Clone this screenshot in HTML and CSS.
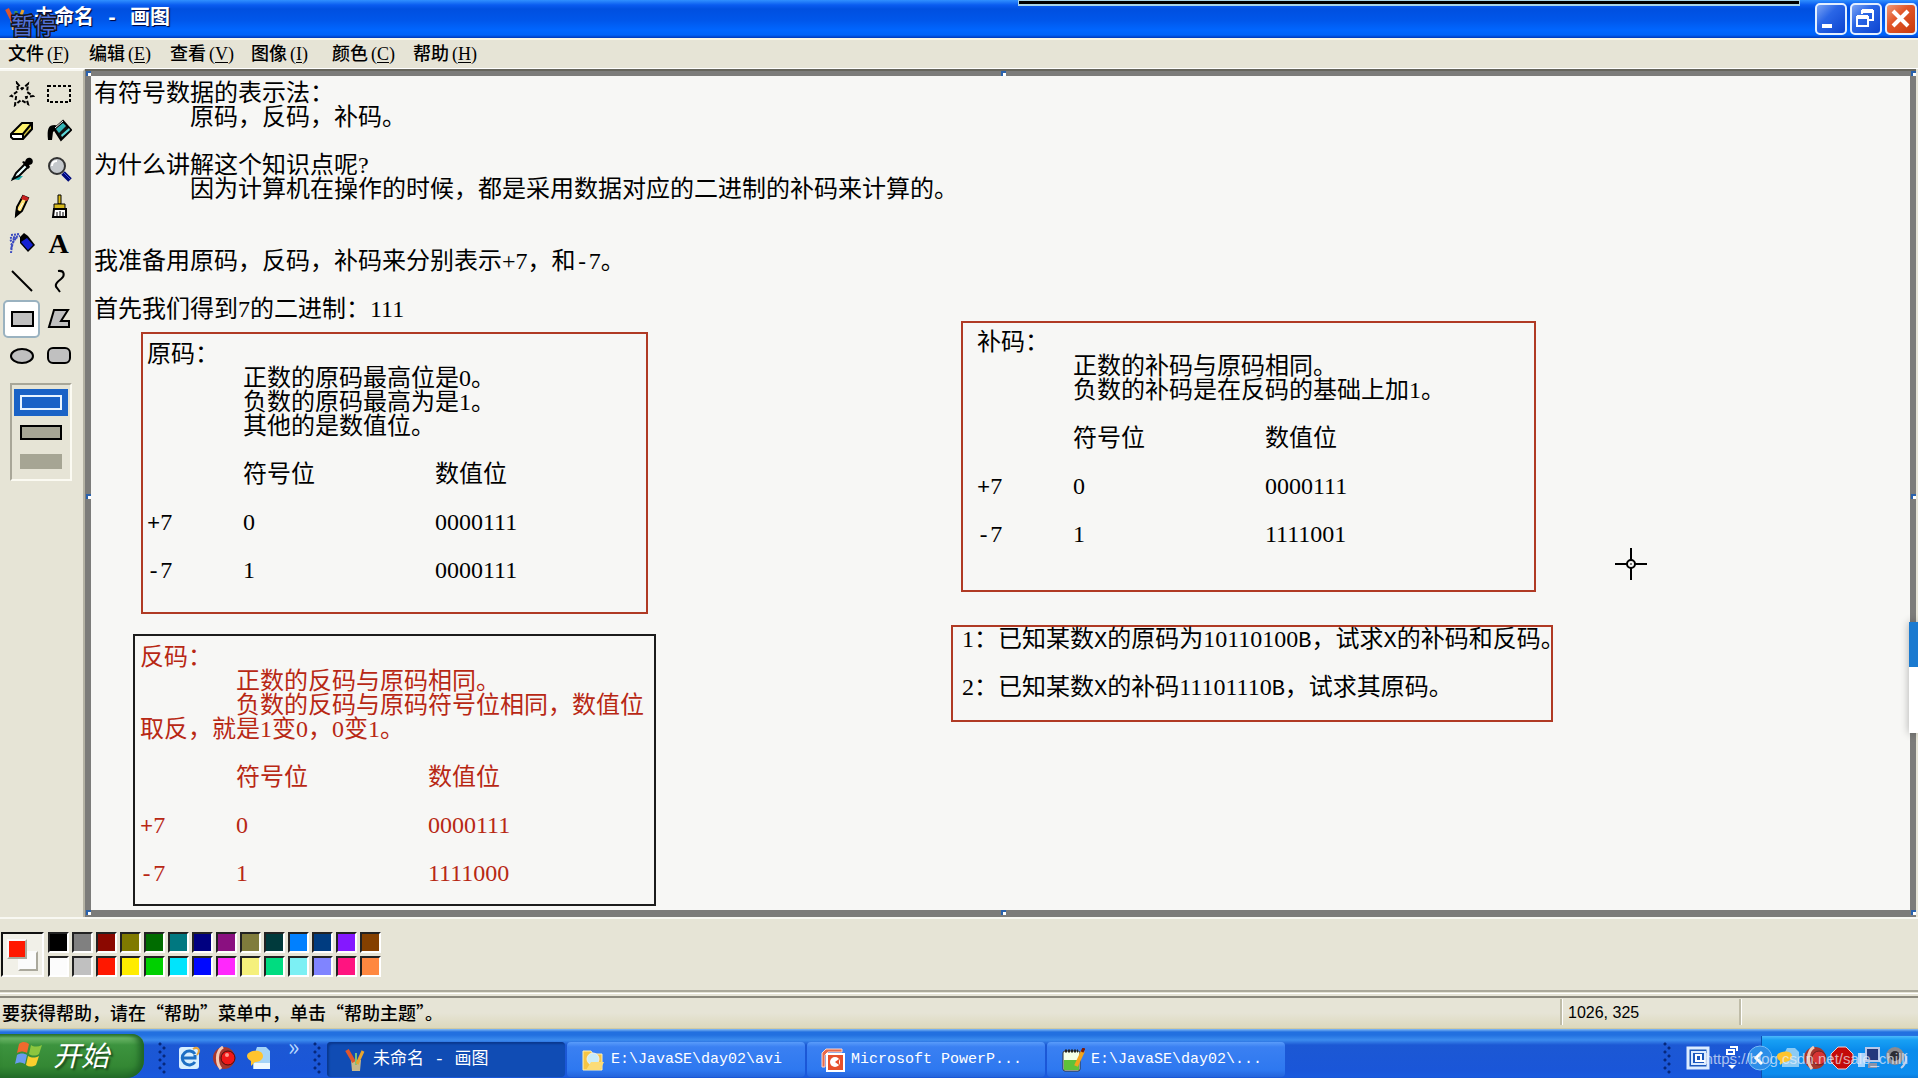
FILE: index.html
```html
<!DOCTYPE html>
<html lang="zh-CN">
<head>
<meta charset="utf-8">
<title>未命名 - 画图</title>
<link rel="stylesheet" href="styles.css">
</head>
<body>
<header class="titlebar">
  <svg class="app-icon" viewBox="0 0 24 26"><path d="M6 12l2 12h8l2-12z" fill="#c8b88a"/><path d="M3 3l6 12" stroke="#e0562c" stroke-width="4"/><path d="M12 5v12" stroke="#4d9b4a" stroke-width="3"/><path d="M19 4l-5 13" stroke="#e7a52f" stroke-width="3"/></svg>
  <h1 class="title">未命名 - 画图</h1>
  <span class="pause-badge">暂停</span>
  <span class="dock-strip"></span>
  <div class="window-buttons">
    <button class="win-btn" aria-label="最小化"><svg viewBox="0 0 28 28"><path d="M5 19h10v4H5z" fill="#fff"/></svg></button>
    <button class="win-btn" aria-label="还原"><svg viewBox="0 0 28 28" fill="none" stroke="#fff" stroke-width="2"><path d="M10 9V6h11v9h-4" /><path d="M5 12h11v9H5z"/><path d="M5 12h11M10 6h11" stroke-width="4"/></svg></button>
    <button class="win-btn close" aria-label="关闭"><svg viewBox="0 0 28 28"><path d="M6 6l15 15M21 6L6 21" stroke="#fff" stroke-width="4"/></svg></button>
  </div>
</header>

<nav class="menubar">
  <button class="menu">文件<span class="key">(<u>F</u>)</span></button>
  <button class="menu">编辑<span class="key">(<u>E</u>)</span></button>
  <button class="menu">查看<span class="key">(<u>V</u>)</span></button>
  <button class="menu">图像<span class="key">(<u>I</u>)</span></button>
  <button class="menu">颜色<span class="key">(<u>C</u>)</span></button>
  <button class="menu">帮助<span class="key">(<u>H</u>)</span></button>
</nav>

<main class="workspace">
  <aside class="toolbox">
    <div class="tools">
      <button class="tool" aria-label="任意形状的裁剪"><svg viewBox="0 0 26 26"><path d="M8 2l5 6 6-5-1 8 6 4-7 1 2 7-7-4-6 5 1-8-5-1 7-5z" fill="none" stroke="#000" stroke-width="2" stroke-dasharray="4 2"/></svg></button>
      <button class="tool" aria-label="选定"><svg viewBox="0 0 26 26"><path d="M2 5h22v16H2z" fill="none" stroke="#000" stroke-width="2" stroke-dasharray="3 2"/></svg></button>
      <button class="tool" aria-label="橡皮"><svg viewBox="0 0 26 26"><path d="M2 16L14 5h9l-9 11z" fill="#fff36b"/><path d="M14 16l9-11v6l-9 10z" fill="#d2c342"/><path d="M2 16h12v5H2z" fill="#fff"/><path d="M2 16L13 5h10v6l-9 10H4l-2-2zh12l9-11M14 16v5" fill="none" stroke="#000" stroke-width="2"/></svg></button>
      <button class="tool" aria-label="用颜色填充"><svg viewBox="0 0 26 26"><path d="M2 22c-1-11 0-15 7-15l4 2-6 5-1 8z" fill="#000"/><path d="M8 11l9-8 8 9-10 10z" fill="#111" stroke="#000" stroke-width="2"/><path d="M10 11l7-6 3 3-7 7z" fill="#31b5b7"/><path d="M15 17l8-7 1 2-8 7z" fill="#5cd8da"/><path d="M9 10l8-7" stroke="#fff" stroke-width="1"/></svg></button>
      <button class="tool" aria-label="取色"><svg viewBox="0 0 26 26"><path d="M2 23c3-4 8-3 12-3l-4 4z" fill="#1aa7aa"/><path d="M4 23l3-6 9-9 3 3-9 9z" fill="#e9ffff" stroke="#000" stroke-width="2"/><path d="M13 6l2-1 1 1c1-5 5-5 7-3 2 3 0 6-3 6l1 2-2 2z" fill="#000"/></svg></button>
      <button class="tool" aria-label="放大镜"><svg viewBox="0 0 26 26"><path d="M17 17l7 7" stroke="#000a79" stroke-width="5"/><path d="M18 17l6 6" stroke="#4653e0" stroke-width="1"/><circle cx="11" cy="10" r="8" fill="#c4c8cc" stroke="#333" stroke-width="2"/><path d="M6 10c0-3 2-5 5-5" stroke="#fff" stroke-width="2" fill="none"/></svg></button>
      <button class="tool" aria-label="铅笔"><svg viewBox="0 0 26 26"><path d="M14 3l5 2-6 13-6 5 1-9z" fill="#ffe071" stroke="#000" stroke-width="2"/><path d="M14 2l6 3-2 3-6-2z" fill="#c71f1f"/><path d="M6 24l1-8 5 3z" fill="#000"/><path d="M14 10l-4 7" stroke="#fff" stroke-width="1"/></svg></button>
      <button class="tool" aria-label="刷子"><svg viewBox="0 0 26 26"><path d="M12 2h3v9h-3z" fill="#ddbd17" stroke="#000"/><path d="M8 11h11v5H8z" fill="#d6b91c" stroke="#000"/><path d="M8 16h12v8H7z" fill="#fff" stroke="#000" stroke-width="2"/><path d="M11 19v5M14 18v6M17 19v5" stroke="#000"/></svg></button>
      <button class="tool" aria-label="喷枪"><svg viewBox="0 0 26 26"><path d="M2 4l9-1M1 7l10-2M1 10l8-4M2 14l5-7M2 18l3-9M2 22l1-8" stroke="#3c4bc0" stroke-width="2" stroke-dasharray="2 1"/><path d="M11 6l4-4 4 3 7 9-7 7-8-9z" fill="#000"/><path d="M12 11l6-4 6 7-5 5z" fill="#1420d2"/></svg></button>
      <button class="tool letter" aria-label="文字">A</button>
      <button class="tool" aria-label="直线"><svg viewBox="0 0 26 26"><path d="M3 3l20 20" stroke="#000" stroke-width="2"/></svg></button>
      <button class="tool" aria-label="曲线"><svg viewBox="0 0 26 26"><path d="M12 3c7-1 7 5 3 8s-7 6-4 9l3 4" fill="none" stroke="#000" stroke-width="2"/></svg></button>
      <button class="tool selected" aria-label="矩形"><svg viewBox="0 0 26 26"><path d="M3 6h21v14H3z" fill="#c0c0c0" stroke="#000" stroke-width="2"/></svg></button>
      <button class="tool" aria-label="多边形"><svg viewBox="0 0 26 26"><path d="M8 4h14l-7 11h8v6H3z" fill="#c0c0c0" stroke="#000" stroke-width="2"/></svg></button>
      <button class="tool" aria-label="椭圆"><svg viewBox="0 0 26 26"><ellipse cx="13" cy="13" rx="11" ry="7" fill="#c0c0c0" stroke="#000" stroke-width="2"/></svg></button>
      <button class="tool" aria-label="圆角矩形"><svg viewBox="0 0 26 26"><rect x="2" y="5" width="22" height="15" rx="5" fill="#c0c0c0" stroke="#000" stroke-width="2"/></svg></button>
    </div>
    <div class="fill-options">
      <button class="fill-option outline selected" aria-label="仅边框"><span></span></button>
      <button class="fill-option both" aria-label="边框和填充"><span></span></button>
      <button class="fill-option solid" aria-label="仅填充"><span></span></button>
    </div>
  </aside>

  <section class="stage">
    <div class="canvas">
      <div class="note intro">
        <p>有符号数据的表示法：</p>
        <p class="indent">原码，反码，补码。</p>
        <p class="skip">为什么讲解这个知识点呢?</p>
        <p class="indent">因为计算机在操作的时候，都是采用数据对应的二进制的补码来计算的。</p>
        <p class="skip-two">我准备用原码，反码，补码来分别表示+7，和<span class="mono">-</span>7。</p>
        <p class="skip">首先我们得到7的二进制：111</p>
      </div>

      <div class="note box yuan">
        <p>原码：</p>
        <p class="indent">正数的原码最高位是0。</p>
        <p class="indent">负数的原码最高为是1。</p>
        <p class="indent">其他的是数值位。</p>
        <table>
          <tr><th></th><th>符号位</th><th>数值位</th></tr>
          <tr><td><span class="mono">+</span>7</td><td>0</td><td>0000111</td></tr>
          <tr><td><span class="mono">-</span>7</td><td>1</td><td>0000111</td></tr>
        </table>
      </div>

      <div class="note box fan">
        <p>反码：</p>
        <p class="indent">正数的反码与原码相同。</p>
        <p class="indent">负数的反码与原码符号位相同，数值位</p>
        <p>取反，就是1变0，0变1。</p>
        <table>
          <tr><th></th><th>符号位</th><th>数值位</th></tr>
          <tr><td><span class="mono">+</span>7</td><td>0</td><td>0000111</td></tr>
          <tr><td><span class="mono">-</span>7</td><td>1</td><td>1111000</td></tr>
        </table>
      </div>

      <div class="note box bu">
        <p>补码：</p>
        <p class="indent">正数的补码与原码相同。</p>
        <p class="indent">负数的补码是在反码的基础上加1。</p>
        <table>
          <tr><th></th><th>符号位</th><th>数值位</th></tr>
          <tr><td><span class="mono">+</span>7</td><td>0</td><td>0000111</td></tr>
          <tr><td><span class="mono">-</span>7</td><td>1</td><td>1111001</td></tr>
        </table>
      </div>

      <div class="note box quiz">
        <p>1：已知某数<span class="mono">X</span>的原码为10110100<span class="mono">B</span>，试求<span class="mono">X</span>的补码和反码。</p>
        <p class="skip">2：已知某数<span class="mono">X</span>的补码11101110<span class="mono">B</span>，试求其原码。</p>
      </div>

      <svg class="crosshair" viewBox="0 0 32 32" fill="none" stroke="#000" stroke-width="2"><path d="M0 16h12M20 16h12M16 0v12M16 20v12"/><circle cx="16" cy="16" r="4"/><path d="M15 16h2" stroke-width="1"/></svg>
    </div>
    <i class="handle nw"></i><i class="handle n"></i><i class="handle ne"></i>
    <i class="handle w"></i><i class="handle e"></i>
    <i class="handle sw"></i><i class="handle s"></i><i class="handle se"></i>
  </section>
  <span class="side-tab"></span>
</main>

<section class="palette">
  <div class="current"><span class="back"></span><span class="front"></span></div>
  <div class="swatches">
    <button class="swatch" style="background:#000" aria-label="颜色"></button>
    <button class="swatch" style="background:#808080" aria-label="颜色"></button>
    <button class="swatch" style="background:#8b0800" aria-label="颜色"></button>
    <button class="swatch" style="background:#807a00" aria-label="颜色"></button>
    <button class="swatch" style="background:#006c00" aria-label="颜色"></button>
    <button class="swatch" style="background:#007880" aria-label="颜色"></button>
    <button class="swatch" style="background:#000080" aria-label="颜色"></button>
    <button class="swatch" style="background:#8a1080" aria-label="颜色"></button>
    <button class="swatch" style="background:#807c3c" aria-label="颜色"></button>
    <button class="swatch" style="background:#003a3c" aria-label="颜色"></button>
    <button class="swatch" style="background:#0080ff" aria-label="颜色"></button>
    <button class="swatch" style="background:#003c80" aria-label="颜色"></button>
    <button class="swatch" style="background:#8418ff" aria-label="颜色"></button>
    <button class="swatch" style="background:#844000" aria-label="颜色"></button>
    <button class="swatch" style="background:#fcfcfc" aria-label="颜色"></button>
    <button class="swatch" style="background:#c0c0c0" aria-label="颜色"></button>
    <button class="swatch" style="background:#ff1800" aria-label="颜色"></button>
    <button class="swatch" style="background:#ffec00" aria-label="颜色"></button>
    <button class="swatch" style="background:#00d000" aria-label="颜色"></button>
    <button class="swatch" style="background:#00e4fc" aria-label="颜色"></button>
    <button class="swatch" style="background:#0008ff" aria-label="颜色"></button>
    <button class="swatch" style="background:#ff28fc" aria-label="颜色"></button>
    <button class="swatch" style="background:#f5f07c" aria-label="颜色"></button>
    <button class="swatch" style="background:#00dc80" aria-label="颜色"></button>
    <button class="swatch" style="background:#7cf0f4" aria-label="颜色"></button>
    <button class="swatch" style="background:#8084ff" aria-label="颜色"></button>
    <button class="swatch" style="background:#ff1480" aria-label="颜色"></button>
    <button class="swatch" style="background:#ff8840" aria-label="颜色"></button>
  </div>
</section>

<footer class="statusbar">
  <span class="hint">要获得帮助，请在“帮助”菜单中，单击“帮助主题”。</span>
  <span class="coords">1026, 325</span>
  <span class="size"></span>
</footer>

<nav class="taskbar">
  <button class="start">
    <svg class="flag" viewBox="0 0 28 28"><path d="M4 4c4-3 7-2 10 0l-2 9c-4-2-7-2-10 0z" fill="#ef6a2e"/><path d="M16 5c3 2 7 2 11 0l-3 9c-3 2-7 2-10 0z" fill="#8cc63f"/><path d="M2 15c3-2 7-2 10 0l-2 9c-3-2-6-2-10 0z" fill="#6a9cf0"/><path d="M13 16c4 2 7 2 11 0l-3 9c-4 2-7 2-10 0z" fill="#fbcf2e"/></svg>
    开始
  </button>
  <div class="quick">
    <span class="grip"></span>
    <svg class="ico" viewBox="0 0 24 24"><rect x="2" y="1" width="20" height="22" rx="3" fill="#d8efff"/><path d="M18 16a7 7 0 1 1 0-8M6 12h12v-3" fill="none" stroke="#1d6fc4" stroke-width="3"/><path d="M16 3c5-3 8 1 4 6" stroke="#e8a33a" stroke-width="2" fill="none"/></svg>
    <svg class="ico" viewBox="0 0 24 24"><circle cx="12" cy="12" r="11" fill="#a6362d"/><path d="M11 1C4 5 4 17 9 23" fill="none" stroke="#f5c9b5" stroke-width="3"/><circle cx="16" cy="12" r="7" fill="#f01818" stroke="#4b0d0d"/><circle cx="15" cy="9" r="2" fill="#ff9a8c"/></svg>
    <svg class="ico" viewBox="0 0 24 24"><path d="M10 1h9l4 4v18H6V12z" fill="#a5d4f7"/><path d="M7 17h16v6H7z" fill="#eef9ff"/><path d="M0 10c0-6 16-8 16 0 0 5-6 6-8 6l-4 4v-5c-2-1-4-3-4-5z" fill="#ffc42e"/></svg>
    <span class="more">»</span>
    <span class="grip"></span>
  </div>
  <div class="tasks">
    <button class="task active"><svg class="ico" viewBox="0 0 24 24"><path d="M8 12l1 11h8l1-11z" fill="#c8b88a"/><path d="M4 2l7 12" stroke="#e0562c" stroke-width="4"/><path d="M13 5v12" stroke="#7bc17a" stroke-width="2"/><path d="M20 3l-6 13" stroke="#e7a52f" stroke-width="3"/></svg><span>未命名 - 画图</span></button>
    <button class="task"><svg class="ico" viewBox="0 0 24 24"><path d="M2 3h8l2 3h9v16H2z" fill="#f6c545" stroke="#fff2b8"/><circle cx="12" cy="11" r="6" fill="#c9ecf8" stroke="#eee"/><path d="M5 22l5-8h13l-4 8z" fill="#fbdc77"/></svg><span>E:\JavaSE\day02\avi</span></button>
    <button class="task"><svg class="ico" viewBox="0 0 24 24"><path d="M1 19V5l4-4h16v3H7L4 7v12z" fill="#e8694b" stroke="#ffd9cb"/><rect x="6" y="6" width="17" height="17" fill="#e6502c" stroke="#fff" stroke-width="2"/><circle cx="14" cy="14" r="5" fill="#fff"/><path d="M14 14l4-3v6z" fill="#e6502c"/></svg><span>Microsoft PowerP...</span></button>
    <button class="task"><svg class="ico" viewBox="0 0 24 24"><rect x="2" y="3" width="17" height="20" rx="2" fill="#f5ffe8" stroke="#333"/><path d="M3 12h15v10H3z" fill="#5fc23a"/><path d="M4 3h13" stroke="#222" stroke-width="3" stroke-dasharray="2 1"/><path d="M22 3l-7 15" stroke="#f4a51c" stroke-width="4"/><path d="M23 0l-2 4" stroke="#7b1d0e" stroke-width="3"/></svg><span>E:\JavaSE\day02\...</span></button>
  </div>
  <div class="lang">
    <span class="grip"></span>
    <svg class="ico" viewBox="0 0 24 24"><rect x="2" y="2" width="20" height="20" fill="#1b58bd" stroke="#dcecff" stroke-width="3"/><rect x="6" y="6" width="13" height="12" fill="none" stroke="#dcecff" stroke-width="2"/><path d="M10 9h5v6h-5zM15 15h4" stroke="#fff" stroke-width="2" fill="none"/></svg>
    <svg class="lang-arrow" viewBox="0 0 14 26" fill="none" stroke="#fff" stroke-width="2"><path d="M5 2h7v4M2 5h7v4H2z"/><path d="M3 20h8l-4 4z" fill="#fff" stroke="none"/></svg>
  </div>
  <div class="tray">
    <button class="collapse" aria-label="隐藏图标"><svg viewBox="0 0 26 26"><circle cx="13" cy="13" r="12" fill="#2d8ee8" stroke="#79bdf7"/><path d="M15 7l-6 6 6 6" fill="none" stroke="#fff" stroke-width="3"/></svg></button>
    <svg class="ico" viewBox="0 0 24 24"><path d="M11 2h8l4 4v15H6V12z" fill="#8ccbf4"/><path d="M1 10c0-5 15-7 15 0 0 5-6 6-8 6l-4 3v-4c-2-1-3-3-3-5z" fill="#ffc42e"/></svg>
    <svg class="ico" viewBox="0 0 24 24"><circle cx="12" cy="12" r="11" fill="#a6362d"/><path d="M11 1C4 5 4 17 9 23" fill="none" stroke="#f5c9b5" stroke-width="3"/><circle cx="16" cy="12" r="7" fill="#d83434" stroke="#6b2020"/></svg>
    <svg class="ico" viewBox="0 0 24 24"><path d="M8 1h8l7 7v8l-7 7H8l-7-7V8z" fill="#c40a0a" stroke="#f2d0d0"/></svg>
    <svg class="ico" viewBox="0 0 24 24"><path d="M9 2h13v13H9z" fill="#24387c" stroke="#b9c8e8" stroke-width="2"/><path d="M1 7h7v14H1z" fill="#a9d5ff"/><path d="M11 17h9v5h-9z" fill="#8b92a8"/></svg>
    <svg class="ico" viewBox="0 0 24 24"><circle cx="11" cy="10" r="9" fill="#8b8b90"/><circle cx="11" cy="10" r="5" fill="#2c2c33"/><path d="M17 22c4-3 6-8 4-14" fill="none" stroke="#c3cfe8" stroke-width="2"/></svg>
  </div>
  <span class="watermark">https://blog.csdn.net/sale_chilli</span>
</nav>
</body>
</html>
```
FILE: styles.css
```css
* { box-sizing: border-box; }

body {
  margin: 0;
  min-height: 100vh;
  display: flex;
  flex-direction: column;
  background: #e6e4d6;
  color: #000;
  font-family: "Noto Sans CJK SC", sans-serif;
  font-size: 18px;
  overflow: hidden;
}

button {
  margin: 0;
  padding: 0;
  border: 0;
  background: none;
  font: inherit;
  color: inherit;
}

p, h1 { margin: 0; font-weight: 400; }

/* title bar */
.titlebar {
  position: relative;
  display: flex;
  align-items: center;
  height: 38px;
  padding: 0 1px 0 4px;
  background: linear-gradient(#3090ff 0, #0a5cf0 5px, #0050e0 9px, #0056ea 20px, #0066ff 30px, #0062f8 35px, #0038b8 38px);
}
.app-icon { width: 24px; height: 26px; }
.title {
  margin-left: 6px;
  flex: 1;
  color: #fff;
  font-family: "Liberation Mono", "Noto Sans CJK SC", monospace;
  font-size: 20px;
  font-weight: 700;
  line-height: 24px;
  text-shadow: 1px 1px 1px #003;
}
.pause-badge {
  position: absolute;
  left: 11px;
  top: 10px;
  color: #5272d8;
  font-size: 23px;
  line-height: 28px;
  -webkit-text-stroke: 3px #16161e;
  paint-order: stroke fill;
}
.dock-strip {
  position: absolute;
  right: 118px;
  top: 0;
  width: 782px;
  height: 6px;
  background: #000;
  border: solid #a8d4e8;
  border-width: 1px 1px 2px 1px;
}
.window-buttons { display: flex; gap: 3px; }
.win-btn {
  width: 32px;
  height: 32px;
  border: 2px solid #e4f0ff;
  border-radius: 5px;
  background: linear-gradient(135deg, #7ba4f4, #2a66e6 40%, #0c44d0);
}
.win-btn.close { background: linear-gradient(135deg, #f09a78, #e2572a 40%, #c83a0c); }
.win-btn svg { display: block; width: 28px; height: 28px; }

/* menu bar */
.menubar {
  display: flex;
  align-items: flex-start;
  height: 31px;
  padding-left: 8px;
  border-top: 2px solid #f8f6e6;
  border-bottom: 1px solid #fff;
}
.menu {
  width: 81px;
  line-height: 24px;
  text-align: left;
  white-space: nowrap;
  font-weight: 500;
}
.key {
  margin-left: 3px;
  font-family: "Liberation Serif", serif;
  font-size: 18px;
  font-weight: 400;
}
.key u { text-underline-offset: 2px; }

/* work area */
.workspace {
  position: relative;
  flex: 1;
  display: flex;
  min-height: 848px;
  padding-right: 2px;
}
.toolbox {
  width: 85px;
  padding: 4px 3px 0;
  border-top: 2px solid #f8f8f2;
  border-right: 2px solid #b4b2a4;
}
.tools {
  display: grid;
  grid-template-columns: 37px 37px;
  grid-auto-rows: 1fr;
  height: 300px;
}
.tool {
  display: flex;
  align-items: center;
  justify-content: center;
  border-radius: 5px;
}
.tool svg { width: 26px; height: 26px; }
.tool.selected { background: #fff; border: 2px solid #9ab2c0; }
.tool.letter {
  font-family: "Liberation Serif", serif;
  font-size: 28px;
  font-weight: 700;
  line-height: 30px;
}
.fill-options {
  display: flex;
  flex-direction: column;
  gap: 3px;
  width: 62px;
  height: 98px;
  margin: 8px 0 0 7px;
  padding: 4px 2px;
  border: 2px solid;
  border-color: #a8a698 #fbfaf2 #fbfaf2 #a8a698;
}
.fill-option {
  display: flex;
  align-items: center;
  justify-content: center;
  height: 27px;
}
.fill-option span { width: 42px; height: 15px; }
.fill-option.selected { background: #1a62c6; }
.outline span { border: 2px solid #e8f4ff; }
.both span { border: 2px solid #000; background: #a6a594; }
.solid span { background: #a6a594; }

.stage {
  position: relative;
  flex: 1;
  display: flex;
  padding: 5px 6px 7px;
  background: #7c7c7a;
  border-top: 2px solid #66655c;
}
.canvas {
  position: relative;
  flex: 1;
  background: #f7f7f5;
}
.handle {
  position: absolute;
  width: 5px;
  height: 5px;
  background: #fff;
  border: solid #2a62ac;
  border-width: 2px 0 0 2px;
}
.nw, .n, .ne { top: 0; }
.sw, .s, .se { bottom: 2px; }
.nw, .w, .sw { left: 1px; }
.ne, .e, .se { right: 0; }
.n, .s { left: 50%; }
.w, .e { top: 50%; }

.side-tab {
  position: absolute;
  right: 0;
  top: 553px;
  width: 9px;
  height: 111px;
  background: linear-gradient(#1a7ad0 45px, #fff 45px);
  box-shadow: 0 0 8px rgba(0, 0, 0, .3);
}

/* text blocks and frames placed on the drawing */
.note {
  position: absolute;
  font-family: "Liberation Serif", "Noto Sans CJK SC", serif;
  font-size: 24px;
  line-height: 24px;
  white-space: nowrap;
}
.mono { font-family: "Liberation Mono", monospace; font-size: 22px; line-height: 16px; }
.indent { margin-left: 96px; }
.skip { margin-top: 24px; }
.skip-two { margin-top: 48px; }
.intro { left: 3px; top: 5px; }
.box { border: 2px solid #b03a24; }
.yuan { left: 50px; top: 256px; width: 507px; height: 282px; padding: 8px 4px; }
.fan { left: 42px; top: 558px; width: 523px; height: 272px; padding: 9px 5px; border-color: #1c1c1c; color: #b82814; }
.bu { left: 870px; top: 245px; width: 575px; height: 271px; padding: 7px 14px; }
.quiz { left: 860px; top: 549px; width: 602px; height: 97px; padding: 0 9px; }

.note table { border-collapse: collapse; margin-top: 24px; }
.note th, .note td {
  padding: 0 0 24px;
  width: 192px;
  min-width: 192px;
  text-align: left;
  font-weight: 400;
}
.note th:first-child, .note td:first-child { width: 96px; min-width: 96px; }

.crosshair { position: absolute; left: 1524px; top: 472px; width: 32px; height: 32px; }

/* colour box */
.palette {
  display: flex;
  gap: 4px;
  height: 75px;
  padding: 13px 1px 0;
  border-top: 2px solid #f8f8f2;
  border-bottom: 2px solid #aaa89a;
}
.current {
  position: relative;
  width: 43px;
  height: 45px;
  background: #f1f0e8;
  border: 2px solid;
  border-color: #111 #fff #fff #111;
}
.front, .back {
  position: absolute;
  width: 20px;
  height: 20px;
  background: #fbfbfb;
  border: 2px solid;
  border-color: #fafafa #aaa89c #aaa89c #fafafa;
}
.front { left: 4px; top: 5px; background: #ff1800; }
.back { left: 15px; top: 17px; }
.swatches {
  display: grid;
  grid-template-columns: repeat(14, 21px);
  grid-auto-rows: 21px;
  gap: 3px;
}
.swatch {
  border: 2px solid;
  border-color: #222 #fff #fff #222;
}

/* status bar */
.statusbar {
  display: flex;
  align-items: center;
  height: 36px;
  margin-top: 1px;
  padding: 4px 0 2px 2px;
  background: linear-gradient(#e6e4d6 20px, #dcd8bc);
  border-bottom: 1px solid #cfc9a4;
  box-shadow: inset 0 1px #fff, inset 0 3px #e6e4d6, inset 0 5px #8c8a7e;
}
.hint { flex: 1; line-height: 24px; font-weight: 500; }
.coords, .size {
  height: 26px;
  border-left: 2px solid #bfbca8;
  box-shadow: inset 1px 0 #fff;
  font-family: "Liberation Sans", sans-serif;
  font-size: 16px;
  line-height: 28px;
}
.coords { width: 179px; padding-left: 6px; }
.size { width: 179px; }

/* task bar */
.taskbar {
  position: relative;
  display: flex;
  align-items: flex-end;
  height: 51px;
  background: linear-gradient(#86bcf4 0, #2270e0 3px, #2270e0 6px, #3c8cee 11px, #1c58d4 16px, #1a56d8 40px, #1a5ade 48px, #1444b0);
}
.start {
  display: flex;
  align-items: center;
  gap: 10px;
  width: 144px;
  height: 44px;
  margin-bottom: 2px;
  padding: 0 0 4px 15px;
  border-radius: 0 12px 18px 0;
  background: linear-gradient(#2e7a30 0, #6cb868 4px, #3c933e 11px, #348834 32px, #24702a);
  box-shadow: inset -5px 0 6px #1f6426;
  color: #fff;
  font-size: 28px;
  font-style: italic;
  line-height: 40px;
  text-shadow: 2px 2px 2px #1b4a1b;
}
.flag { width: 28px; height: 28px; }
.quick {
  display: flex;
  align-items: center;
  gap: 11px;
  width: 183px;
  height: 44px;
  padding-left: 14px;
}
.grip {
  flex: none;
  width: 8px;
  height: 32px;
  background:
    radial-gradient(circle at 2px 2px, #06287c 1px, transparent 2px) 0 0 / 8px 8px,
    radial-gradient(circle at 6px 6px, #06287c 1px, transparent 2px) 0 0 / 8px 8px;
}
.ico { width: 24px; height: 24px; flex: none; }
.more {
  align-self: flex-start;
  margin-left: 6px;
  color: #b8d8ff;
  font-size: 24px;
  line-height: 20px;
  width: 14px;
}
.tasks { display: flex; gap: 2px; flex: 1; height: 38px; padding-bottom: 3px; }
.task {
  display: flex;
  align-items: center;
  gap: 6px;
  width: 238px;
  padding-left: 14px;
  border-radius: 4px;
  background: linear-gradient(#5a9cfa 0, #3a80f2 5px, #2e78f0 28px, #2464dc);
  color: #fff;
  font-family: "Liberation Mono", "Noto Sans CJK SC", monospace;
  font-size: 15px;
  line-height: 26px;
  white-space: pre;
}
.task.active {
  padding-left: 16px;
  background: #104cb4;
  box-shadow: inset 2px 2px 2px #0a3890;
  font-size: 17px;
}
.lang { display: flex; align-items: center; gap: 15px; height: 44px; width: 98px; }
.lang-arrow { width: 14px; height: 26px; }
.tray {
  display: flex;
  align-items: center;
  gap: 3px;
  width: 157px;
  height: 44px;
  background: linear-gradient(#4cb8fa 0, #18a0f4 4px, #0a8cec 14px, #0c8cee 38px, #0a70d0);
  border-left: 1px solid #0b4fb0;
}
.collapse { width: 26px; height: 26px; margin-left: -15px; }
.collapse svg { display: block; }
.watermark {
  position: absolute;
  right: 10px;
  top: 20px;
  color: rgba(235, 240, 250, .7);
  font-family: "Liberation Sans", sans-serif;
  font-size: 15px;
  line-height: 20px;
}
```
